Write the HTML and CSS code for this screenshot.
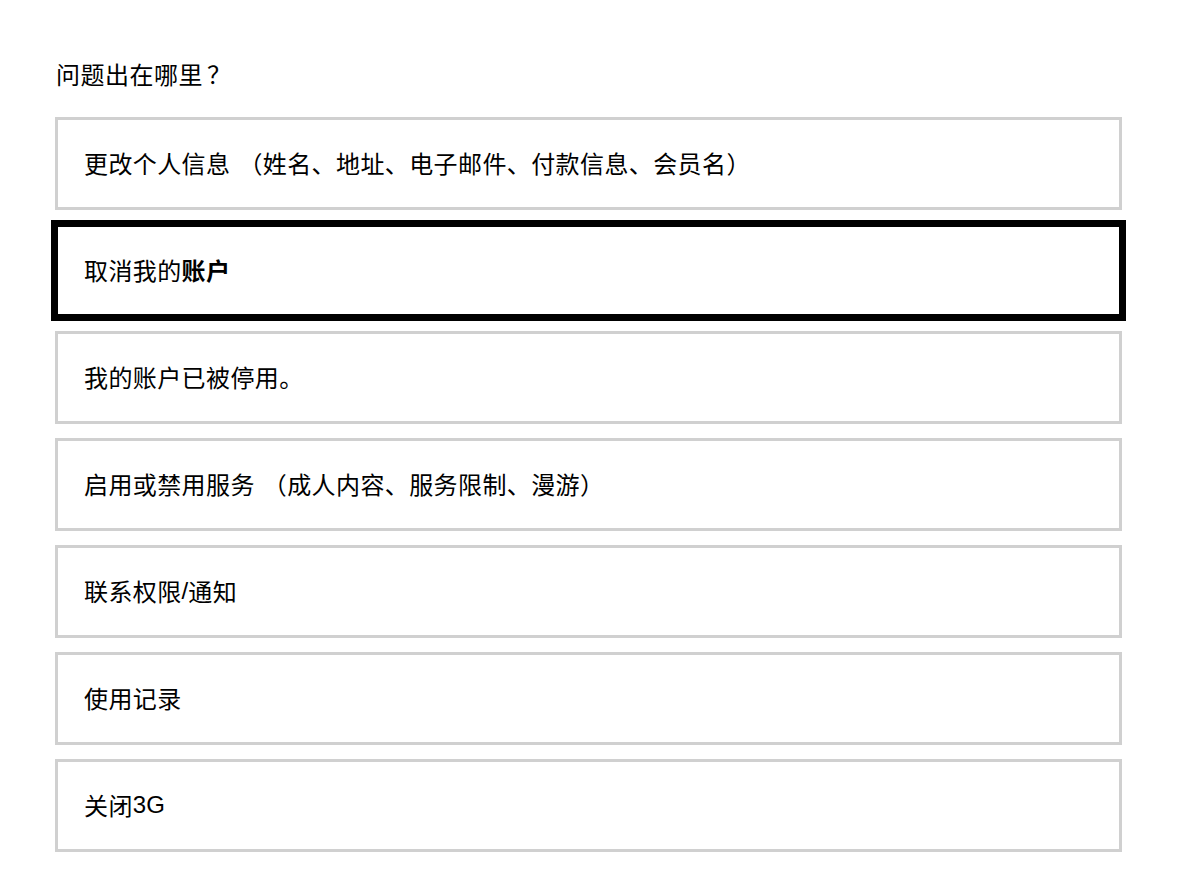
FILE: index.html
```html
<!DOCTYPE html>
<html lang="zh-CN">
<head>
<meta charset="utf-8">
<title>问题出在哪里？</title>
<link rel="stylesheet" href="styles.css">
</head>
<body>
<main class="page">
  <h1 class="question">问题出在哪里<span class="qmark">？</span></h1>
  <div class="options">
    <div class="option">更改个人信息<span class="paren">（</span>姓名、地址、电子邮件、付款信息、会员名）</div>
    <div class="option selected">取消我的<b>账户</b></div>
    <div class="option">我的账户已被停用。</div>
    <div class="option">启用或禁用服务<span class="paren">（</span>成人内容、服务限制、漫游）</div>
    <div class="option">联系权限<span class="latin">/</span>通知</div>
    <div class="option">使用记录</div>
    <div class="option">关闭<span class="latin">3G</span></div>
  </div>
</main>
</body>
</html>
```

FILE: styles.css
```css
html, body {
  margin: 0;
  padding: 0;
  background: #ffffff;
}

body {
  font-family: "Noto Sans CJK SC", "Liberation Sans", sans-serif;
  color: #000000;
  text-spacing-trim: space-all;
  font-feature-settings: "chws" 0, "halt" 0, "palt" 0;
}

.page {
  padding: 56px 77px 0 55px;
}

.question {
  margin: 0 0 25px 1px;
  font-size: 24px;
  font-weight: normal;
  line-height: 36px;
  letter-spacing: 0.5px;
}

.qmark {
  font-family: "Noto Sans CJK TC", "Noto Sans CJK SC", sans-serif;
  padding-left: 4px;
}

.options {
  display: flex;
  flex-direction: column;
  gap: 14px;
}

.option {
  box-sizing: border-box;
  height: 93px;
  border: 3px solid #d0d0d0;
  display: flex;
  align-items: center;
  padding-left: 26px;
  font-size: 24px;
  line-height: 1;
  letter-spacing: 0.4px;
  padding-bottom: 2px;
}

.paren {
  margin-left: 8px;
}

.latin {
  font-family: "Liberation Sans", sans-serif;
  letter-spacing: 0;
}

.option b {
  font-weight: bold;
}

.option.selected {
  border-color: #000000;
  box-shadow: 0 0 0 4px #000000;
}
```
